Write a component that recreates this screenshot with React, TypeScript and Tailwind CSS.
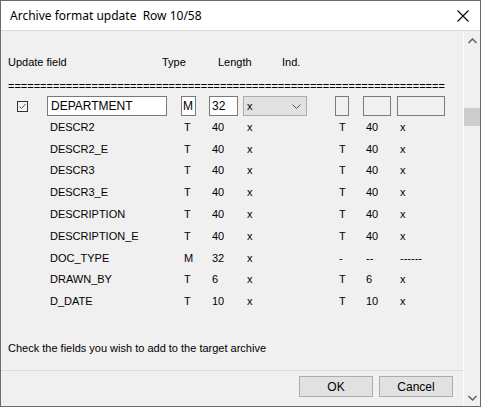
import React from "react";

type Row = { name: string; type: string; len: string; x: string; t2: string; l2: string; ind: string };

const rows: Row[] = [
  { name: "DESCR2", type: "T", len: "40", x: "x", t2: "T", l2: "40", ind: "x" },
  { name: "DESCR2_E", type: "T", len: "40", x: "x", t2: "T", l2: "40", ind: "x" },
  { name: "DESCR3", type: "T", len: "40", x: "x", t2: "T", l2: "40", ind: "x" },
  { name: "DESCR3_E", type: "T", len: "40", x: "x", t2: "T", l2: "40", ind: "x" },
  { name: "DESCRIPTION", type: "T", len: "40", x: "x", t2: "T", l2: "40", ind: "x" },
  { name: "DESCRIPTION_E", type: "T", len: "40", x: "x", t2: "T", l2: "40", ind: "x" },
  { name: "DOC_TYPE", type: "M", len: "32", x: "x", t2: "-", l2: "--", ind: "------" },
  { name: "DRAWN_BY", type: "T", len: "6", x: "x", t2: "T", l2: "6", ind: "x" },
  { name: "D_DATE", type: "T", len: "10", x: "x", t2: "T", l2: "10", ind: "x" },
];

export default function App() {
  return (
    <div className="w-[481px] h-[407px] border border-[#6b6b6b] bg-[#f0f0f0] flex flex-col text-black text-[11px] font-['Liberation_Sans',Arial,sans-serif] leading-[14px] overflow-hidden">
      {/* Title bar */}
      <div className="h-[30px] bg-white flex items-center justify-between pl-[9px] pr-[10px] border-b border-[#dadada] shrink-0">
        <span className="text-[12px] font-['Noto_Sans',sans-serif] leading-[16px]">
          Archive format update&nbsp;&nbsp;Row 10/58
        </span>
        <svg width="12" height="12" viewBox="0 0 12 12" className="mr-[1px]">
          <path d="M0.5 0.5 L11.5 11.5 M11.5 0.5 L0.5 11.5" stroke="#000" strokeWidth="1.1" fill="none" />
        </svg>
      </div>

      <div className="flex flex-1 min-h-0">
        {/* Content */}
        <div className="flex-1 flex flex-col">
          <div className="flex pl-[7px] pt-[24px]">
            <span className="w-[154px]">Update field</span>
            <span className="w-[56px]">Type</span>
            <span className="w-[64px]">Length</span>
            <span>Ind.</span>
          </div>
          <div className="ml-[7px] mt-[10px] whitespace-nowrap">
            {"=".repeat(68)}
          </div>

          {/* Edit row */}
          <div className="flex items-center mt-[3px] h-[20px] pl-[16px]">
            <div className="w-[11px] h-[11px] border border-[#333] bg-[#f4f4f4] flex items-center justify-center">
              <svg width="9" height="9" viewBox="0 0 9 9">
                <path d="M1.5 4.5 L3.5 6.5 L7.5 2" stroke="#555" strokeWidth="1" fill="none" />
              </svg>
            </div>
            <div className="ml-[19px] w-[120px] h-[20px] border border-[#7a7a7a] bg-white pl-[3px] text-[12px] leading-[18px]">
              DEPARTMENT
            </div>
            <div className="ml-[14px] w-[15px] h-[20px] border border-[#7a7a7a] bg-white pl-[1px] text-[12px] leading-[18px]">
              M
            </div>
            <div className="ml-[13px] w-[29px] h-[20px] border border-[#7a7a7a] bg-white pl-[2px] text-[12px] leading-[18px]">
              32
            </div>
            <div className="ml-[5px] w-[64px] h-[20px] border border-[#adadad] bg-[#e1e1e1] pl-[3px] flex items-center justify-between pr-[5px]">
              <span>x</span>
              <svg width="9" height="5" viewBox="0 0 9 5">
                <path d="M0.5 0.5 L4.5 4.5 L8.5 0.5" stroke="#555" strokeWidth="1" fill="none" />
              </svg>
            </div>
            <div className="ml-[28px] w-[14px] h-[20px] border border-[#7a7a7a]" />
            <div className="ml-[14px] w-[28px] h-[20px] border border-[#7a7a7a]" />
            <div className="ml-[6px] w-[48px] h-[20px] border border-[#7a7a7a]" />
          </div>

          {/* Data rows */}
          <div className="flex flex-col">
            {rows.map((r) => (
              <div key={r.name} className="flex items-center h-[21.8px] pl-[49px]">
                <span className="w-[134px]">{r.name}</span>
                <span className="w-[28px]">{r.type}</span>
                <span className="w-[35px]">{r.len}</span>
                <span className="w-[92px]">{r.x}</span>
                <span className="w-[27px]">{r.t2}</span>
                <span className="w-[34px]">{r.l2}</span>
                <span>{r.ind}</span>
              </div>
            ))}
          </div>

          <div className="flex-1" />
          <div className="pl-[7px] mb-[15px]">Check the fields you wish to add to the target archive</div>
          <div className="border-t border-[#dcdcdc]" />
          <div className="flex justify-end gap-[6px] pr-[10px] pt-[5px] pb-[9px]">
            <button className="w-[74px] h-[21px] border border-[#adadad] bg-[#e1e1e1] text-[12px] leading-[18px]">OK</button>
            <button className="w-[74px] h-[21px] border border-[#adadad] bg-[#e1e1e1] text-[12px] leading-[18px]">Cancel</button>
          </div>
        </div>

        {/* Scrollbar */}
        <div className="w-[17px] border-l border-[#fbfbfb] flex flex-col items-center">
          <div className="h-[17px] flex items-center justify-center mt-[1px]">
            <svg width="9" height="6" viewBox="0 0 9 6">
              <path d="M0.5 5 L4.5 1 L8.5 5" stroke="#606060" strokeWidth="1.5" fill="none" />
            </svg>
          </div>
          <div className="mt-[59px] w-[16px] h-[18px] bg-[#cdcdcd]" />
          <div className="flex-1" />
          <div className="h-[17px] flex items-center justify-center">
            <svg width="9" height="6" viewBox="0 0 9 6">
              <path d="M0.5 1 L4.5 5 L8.5 1" stroke="#606060" strokeWidth="1.5" fill="none" />
            </svg>
          </div>
        </div>
      </div>
    </div>
  );
}
